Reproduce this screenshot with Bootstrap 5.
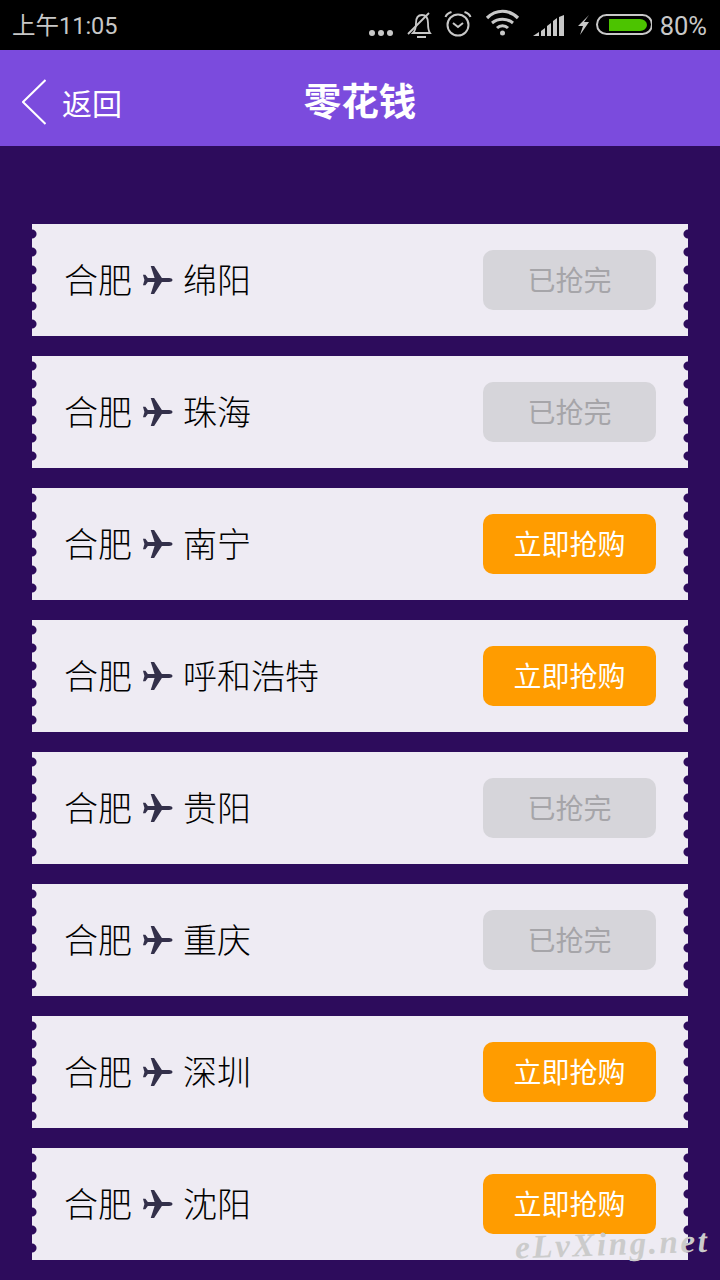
<!DOCTYPE html>
<html lang="zh-CN">
<head>
    <meta charset="UTF-8">
    <meta name="viewport" content="width=device-width, initial-scale=1.0">
    <title>零花钱</title>
    <link rel="stylesheet" href="https://cdn.jsdelivr.net/npm/bootstrap@5.3.0/dist/css/bootstrap.min.css">
    <style>
        body { width: 720px; height: 1280px; overflow: hidden; background: #2d0c5c; font-family: "Noto Sans CJK SC", "Noto Sans", sans-serif; }
        .phone-status { height: 50px; background: #000; color: #c8c8c8; padding: 0 13px 0 12px; font-family: "Roboto", "Noto Sans CJK SC", sans-serif; font-size: 25px; }
        .status-time { font-size: 23.5px; padding-top: 4px; }
        .status-batt { padding-top: 2px; font-size: 25.5px; }
        .top-bar { height: 96px; background: #7b4bdd; color: #fff; }
        .back-link { left: 22px; top: 7px; bottom: 0; gap: 16px; font-size: 30px; }
        .back-text { padding-top: 1px; }
        .top-title { font-size: 37.5px; font-weight: 700; line-height: 1; padding-top: 2px; }
        .ticket-list { padding: 78px 32px 0; gap: 20px; }
        .ticket-row {
            height: 112px;
            padding: 0 32px;
            background-color: #eeebf3;
            background-image: radial-gradient(circle at 0 9px, #2d0c5c 4px, transparent 5px), radial-gradient(circle at 100% 9px, #2d0c5c 4px, transparent 5px);
            background-size: 18px 18px, 18px 18px;
            background-position: 0 1px, 100% 1px;
            background-repeat: repeat-y;
        }
        .route-text { font-size: 34px; font-weight: 300; color: #000; gap: 10px; line-height: 1; }
        .route-name { margin-top: -2px; }
        .buy-btn { width: 173px; height: 60px; border-radius: 10px; font-size: 28px; line-height: 1; padding-bottom: 2px; }
        .buy-on { background: #ff9c00; color: #fff; }
        .buy-off { background: #d6d5da; color: #a6a5a9; }
        .water-mark { right: 10px; bottom: 19px; color: #cbcbcb; font-family: "Liberation Serif", serif; font-style: italic; font-weight: 700; font-size: 33px; letter-spacing: 2.6px; line-height: 1; transform: rotate(-2deg); }
    </style>
</head>
<body class="position-relative">
    <div class="phone-status d-flex align-items-center justify-content-between">
        <span class="status-time">上午11:05</span>
        <div class="d-flex align-items-center">
            <svg width="284" height="40" viewBox="0 0 284 40" fill="none" stroke="#c8c8c8">
                <!-- dots -->
                <circle cx="4" cy="28" r="3" fill="#c8c8c8" stroke="none"/>
                <circle cx="13" cy="28" r="3" fill="#c8c8c8" stroke="none"/>
                <circle cx="22" cy="28" r="3" fill="#c8c8c8" stroke="none"/>
                <!-- bell off -->
                <path d="M45 28c2-2 3-4 3-10 0-5 2-8 6-8s6 3 6 8c0 6 .5 8 2 10z" stroke-width="1.800"/>
                <path d="M49 32h9M40 29 61 8" stroke-width="1.800"/>
                <!-- alarm -->
                <circle cx="90" cy="20" r="10.500" stroke-width="2"/>
                <path d="M85 18l5 4 5-4M77.500 12c1-3 3-4 6-5M102.500 12c-1-3-3-4-6-5" stroke-width="2"/>
                <!-- wifi -->
                <g transform="translate(-1 -2)">
                    <path d="M120 15c9-9 22-9 31 0" stroke-width="3.200"/>
                    <path d="M125 20c6-5 15-5 21 0" stroke-width="3"/>
                    <path d="M130 25c3-3 8-3 11 0" stroke-width="3"/>
                    <circle cx="135.500" cy="30" r="2.500" fill="#c8c8c8" stroke="none"/>
                </g>
                <!-- signal -->
                <path d="M165 31l6-4v4zM173 26l4-3v8h-4zM179 21l4-3v13h-4zM185 16l4-3v18h-4zM191 12l5-2v21h-5z" fill="#c8c8c8" stroke="none"/>
                <!-- bolt -->
                <path d="M221 10l-11 11h5l-3 9 9-13h-5z" fill="#c8c8c8" stroke="none"/>
                <!-- battery -->
                <rect x="229" y="10" width="55" height="19" rx="9.500" stroke-width="2"/>
                <path d="M241 14h31a7 6 0 0 1 0 12h-31z" fill="#4cc400" stroke="none"/>
            </svg>
            <span class="status-batt ms-2">80%</span>
        </div>
    </div>

    <div class="top-bar position-relative d-flex align-items-center justify-content-center">
        <div class="back-link position-absolute d-flex align-items-center">
            <svg width="24" height="46" viewBox="0 0 24 46" fill="none" stroke="#fff" stroke-width="2"><path d="M23.500 1 1 23l22.500 22"/></svg>
            <span class="back-text">返回</span>
        </div>
        <div class="top-title">零花钱</div>
    </div>

    <div id="tickets" class="ticket-list d-flex flex-column"></div>

    <div class="water-mark position-absolute">eLvXing.net</div>

    <script>
        // 航线列表
        const routes = [
            ['绵阳', false], ['珠海', false], ['南宁', true], ['呼和浩特', true],
            ['贵阳', false], ['重庆', false], ['深圳', true], ['沈阳', true]
        ];
        const plane = '<svg width="31" height="32" viewBox="0 0 32 32" fill="#33304a"><path d="M31.500 16c0-1.200-1.500-2-3.500-2h-7.500L12.500 1.500H9L13 14H6L3.500 10.500H1L2.500 16 1 21.500h2.500L6 18h7L9 30.500h3.500L20.500 18H28c2 0 3.500-.800 3.500-2z"/></svg>';
        const box = document.getElementById('tickets');
        routes.forEach(r => {
            const row = document.createElement('div');
            row.className = 'ticket-row d-flex align-items-center justify-content-between';
            row.innerHTML = '<div class="route-text d-flex align-items-center"><span class="route-name">合肥</span>' + plane + '<span class="route-name">' + r[0] + '</span></div>'
                + '<div class="buy-btn d-flex align-items-center justify-content-center ' + (r[1] ? 'buy-on' : 'buy-off') + '">' + (r[1] ? '立即抢购' : '已抢完') + '</div>';
            box.appendChild(row);
        });
    </script>
    <script src="https://cdn.jsdelivr.net/npm/bootstrap@5.3.0/dist/js/bootstrap.bundle.min.js"></script>
</body>
</html>
